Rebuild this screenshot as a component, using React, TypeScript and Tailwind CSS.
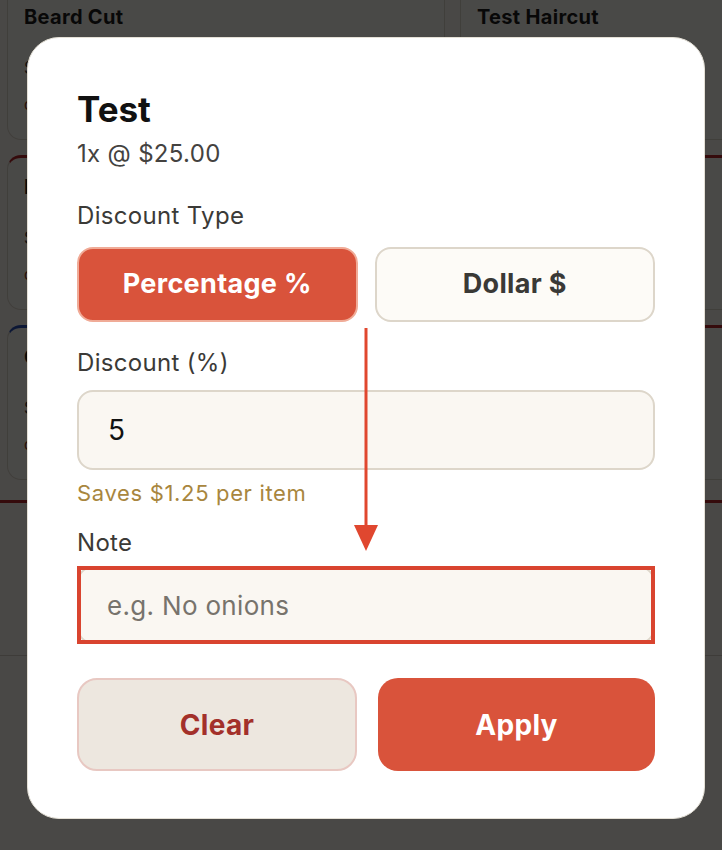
import React from "react";

const font = { fontFamily: "Inter, 'Liberation Sans', sans-serif" };

function BgCard({ title, accent }: { title?: string; accent?: string }) {
  return (
    <div className={`h-[155px] rounded-[14px] border border-[#d8d2c6] bg-[#f6f3ed] px-4 pt-[14px] border-t-[3px] ${accent ?? ""}`}>
      {title && (
        <>
          <div className="text-[20px] font-bold text-[#1b1b1b]">{title}</div>
          <div className="mt-6 text-[17px] text-[#3a3a3a]">$35.00</div>
          <div className="mt-3 text-[15px] text-[#8a3b20]">cut</div>
        </>
      )}
    </div>
  );
}

export default function App() {
  return (
    <div className="relative h-[850px] w-[722px] overflow-hidden bg-[#f5f2ec] tracking-[0.02em]" style={font}>
      {/* page behind the dialog */}
      <div className="-mt-[15px] flex flex-col">
        <div className="grid grid-cols-[438px_438px] gap-x-[15px] gap-y-[15px] pl-[7px]">
          <BgCard title="Beard Cut" />
          <BgCard title="Test Haircut" />
          <BgCard title="Fade" accent="border-t-[#b3262a]" />
          <BgCard accent="border-t-[#b3262a]" />
          <BgCard title="Color" accent="border-t-[#2a4fb3]" />
          <BgCard accent="border-t-[#b3262a]" />
        </div>
        <div className="mt-[20px] h-[3px] bg-[#b3262a]" />
        <div className="h-[152px]" />
        <div className="h-px bg-[#d0cabe]" />
      </div>

      {/* overlay */}
      <div className="absolute inset-0 bg-black/70">
        <div className="relative ml-[27px] mt-[37px] w-[678px] rounded-[32px] border border-[#e4e0d6] bg-white px-[49px] pb-[47px] pt-[51px]">
          <div className="text-[35px] font-bold leading-[40px] tracking-normal text-[#111]">Test</div>
          <div className="mt-[11px] text-[24px] leading-[28px] text-[#444240]">1x @ $25.00</div>

          <div className="mt-[34px] text-[24px] leading-[28px] text-[#3b3a37]">Discount Type</div>
          <div className="mt-[17px] grid grid-cols-2 gap-[17px]">
            <button className="h-[75px] rounded-[16px] border-2 border-[#f0ab97] bg-[#d9533b] text-[27px] font-bold text-white">
              Percentage %
            </button>
            <button className="h-[75px] rounded-[16px] border-2 border-[#ddd6ca] bg-[#fdfbf7] text-[27px] font-bold text-[#3a3936]">
              Dollar $
            </button>
          </div>

          <div className="mt-[27px] text-[24px] leading-[28px] text-[#3b3a37]">Discount (%)</div>
          <div className="mt-[13px] flex h-[80px] items-center rounded-[16px] border-2 border-[#ddd6ca] bg-[#faf7f2] px-[29px] text-[28px] text-[#111]">
            5
          </div>
          <div className="mt-[10px] text-[22px] leading-[26px] tracking-[0.03em] text-[#a8863e]">Saves $1.25 per item</div>

          <div className="mt-[23px] text-[24px] leading-[28px] text-[#3b3a37]">Note</div>
          <div className="relative mt-[9px] h-[78px]">
            <div className="flex h-full items-center rounded-[16px] border-2 border-[#ddd6ca] bg-[#faf7f2] px-[28px] text-[26px] text-[#77736c]">
              e.g. No onions
            </div>
            <div className="absolute inset-0 border-[4px] border-[#d9442f]" />
          </div>

          <div className="mt-[34px] grid grid-cols-[280px_277px] gap-[21px]">
            <button className="h-[93px] rounded-[20px] border-2 border-[#e8c8c2] bg-[#ede7df] text-[28px] font-bold text-[#a3302a]">
              Clear
            </button>
            <button className="h-[93px] rounded-[20px] bg-[#d9533b] text-[28px] font-bold text-white">
              Apply
            </button>
          </div>

          {/* annotation arrow */}
          <svg className="absolute left-[326px] top-[290px]" width="24" height="224" viewBox="0 0 24 224">
            <line x1="12" y1="0" x2="12" y2="200" stroke="#e0472f" strokeWidth="3" />
            <polygon points="0,197 24,197 12,223" fill="#e0472f" />
          </svg>
        </div>
      </div>
    </div>
  );
}
